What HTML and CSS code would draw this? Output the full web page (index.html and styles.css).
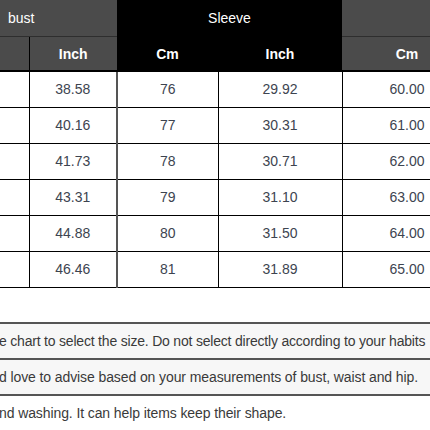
FILE: index.html
```html
<!DOCTYPE html>
<html>
<head>
<meta charset="utf-8">
<link rel="stylesheet" href="styles.css">
</head>
<body>
<div class="page">
  <table class="chart">
    <colgroup>
      <col class="c1"><col class="c2"><col class="c3"><col class="c4"><col class="c5">
    </colgroup>
    <thead>
      <tr class="h1">
        <th colspan="2" class="gray left">bust</th>
        <th colspan="2" class="black">Sleeve</th>
        <th class="gray"></th>
      </tr>
      <tr class="h2">
        <th class="gray sub"></th>
        <th class="gray sub b">Inch</th>
        <th class="black sub b">Cm</th>
        <th class="black sub b">Inch</th>
        <th class="gray sub b">Cm</th>
      </tr>
    </thead>
    <tbody>
      <tr><td></td><td class="sep">38.58</td><td>76</td><td>29.92</td><td>60.00</td></tr>
      <tr><td></td><td class="sep">40.16</td><td>77</td><td>30.31</td><td>61.00</td></tr>
      <tr><td></td><td class="sep">41.73</td><td>78</td><td>30.71</td><td>62.00</td></tr>
      <tr><td></td><td class="sep">43.31</td><td>79</td><td>31.10</td><td>63.00</td></tr>
      <tr><td></td><td class="sep">44.88</td><td>80</td><td>31.50</td><td>64.00</td></tr>
      <tr><td></td><td class="sep">46.46</td><td>81</td><td>31.89</td><td>65.00</td></tr>
    </tbody>
  </table>
  <div class="notes">
    <div class="note tint tight">e chart to select the size. Do not select directly according to your habits</div>
    <div class="note tint">d love to advise based on your measurements of bust, waist and hip.</div>
    <div class="note">nd washing. It can help items keep their shape.</div>
  </div>
</div>
</body>
</html>
```
FILE: styles.css
```css
html, body {
  margin: 0;
  padding: 0;
  background: #fff;
}
.page {
  width: 430px;
  height: 430px;
  overflow: hidden;
  font-family: "Liberation Sans", Arial, sans-serif;
  font-size: 14px;
}
.chart {
  border-collapse: collapse;
  table-layout: fixed;
  width: 472px;
}
.c1 { width: 29px; }
.c2 { width: 88px; }
.c3 { width: 101px; }
.c4 { width: 124px; }
.c5 { width: 130px; }
th {
  color: #fff;
  font-weight: normal;
  padding: 0;
  text-align: center;
}
.h1 th {
  height: 36px;
  border-bottom: 1px solid #2e2e2e;
}
.h1 th.black { border-bottom-color: #000; }
.h2 th { height: 33px; }
.gray { background: #4b4b4b; }
.black { background: #000; }
.left { text-align: left; padding-left: 8px; }
.b { font-weight: bold; }
.h2 th { border-bottom: 2px solid #000; }
.h2 th.gray:first-child { border-right: 1px solid #000; }
td {
  height: 35px;
  padding: 0;
  text-align: center;
  color: #3d4450;
  border: 1px solid #000;
  border-top: none;
  line-height: 35px;
}
td:first-child { border-left: none; }
td.sep { border-right: 2px solid #555; }
.notes {
  margin-top: 34px;
  border-top: 2px solid #555;
}
.note {
  height: 34px;
  line-height: 34px;
  border-bottom: 2px solid #555;
  color: #3a3a3a;
  white-space: nowrap;
  margin-left: -1px;
  letter-spacing: -0.1px;
}
.note.tight { letter-spacing: -0.2px; }
.note.tint { background: #f7f7f7; }
```
